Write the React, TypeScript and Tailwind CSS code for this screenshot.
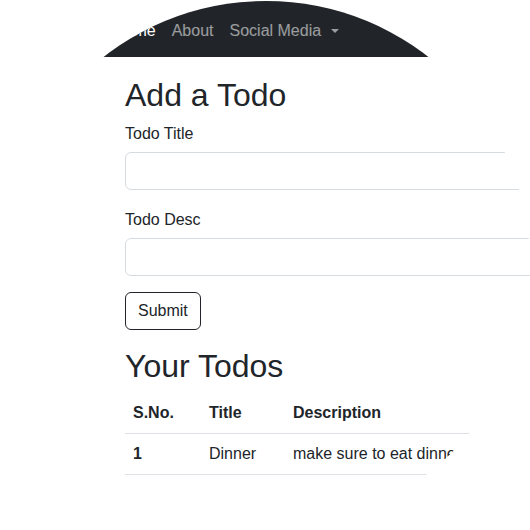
const navLinks = [
  { label: "Home", active: true },
  { label: "About", active: false },
];

const todos = [{ sno: 1, title: "Dinner", desc: "make sure to eat dinner" }];

export default function App() {
  return (
    <div className="w-[530px] h-[530px] overflow-hidden bg-white [clip-path:circle(264px_at_266px_265px)] font-['Liberation_Sans',Arial,sans-serif] text-[#212529]">
      <nav className="h-[57px] bg-[#212529] flex items-center pl-[105px] pt-[5px]">
        {navLinks.map((l) => (
          <a
            key={l.label}
            className={`px-2 text-[16px] leading-6 ${l.active ? "text-white" : "text-white/55"}`}
          >
            {l.label}
          </a>
        ))}
        <a className="px-2 text-[16px] leading-6 text-white/55 flex items-center">
          Social Media
          <span className="ml-[10px] w-0 h-0 border-x-[4.8px] border-x-transparent border-t-[4.8px] border-t-white/55" />
        </a>
      </nav>

      <div className="ml-[125px] w-[500px]">
        <h2 className="mt-[19px] mb-2 text-[32px] leading-[38.4px] font-medium">Add a Todo</h2>
        <form>
          <label className="block text-[16px] leading-6 mb-[6px]">Todo Title</label>
          <input className="block w-full h-[38px] border border-[#d6dbe0] rounded-[6px] mb-[18px]" />
          <label className="block text-[16px] leading-6 mb-[6px]">Todo Desc</label>
          <input className="block w-full h-[38px] border border-[#d6dbe0] rounded-[6px] mb-4" />
          <button
            type="button"
            className="h-[38px] px-3 border border-[#212529] rounded-[6px] text-[16px] leading-6"
          >
            Submit
          </button>
        </form>

        <h2 className="mt-[17px] mb-[7px] text-[32px] leading-[38.4px] font-medium">Your Todos</h2>
        <table className="w-full text-left text-[16px] leading-6 border-collapse">
          <thead>
            <tr className="border-b border-[#dee2e6]">
              <th className="w-[76px] p-2 font-bold">S.No.</th>
              <th className="w-[84px] p-2 font-bold">Title</th>
              <th className="p-2 font-bold">Description</th>
            </tr>
          </thead>
          <tbody>
            {todos.map((t) => (
              <tr key={t.sno} className="border-b border-[#dee2e6]">
                <th className="p-2 font-bold">{t.sno}</th>
                <td className="p-2">{t.title}</td>
                <td className="p-2">{t.desc}</td>
              </tr>
            ))}
          </tbody>
        </table>
      </div>
    </div>
  );
}
